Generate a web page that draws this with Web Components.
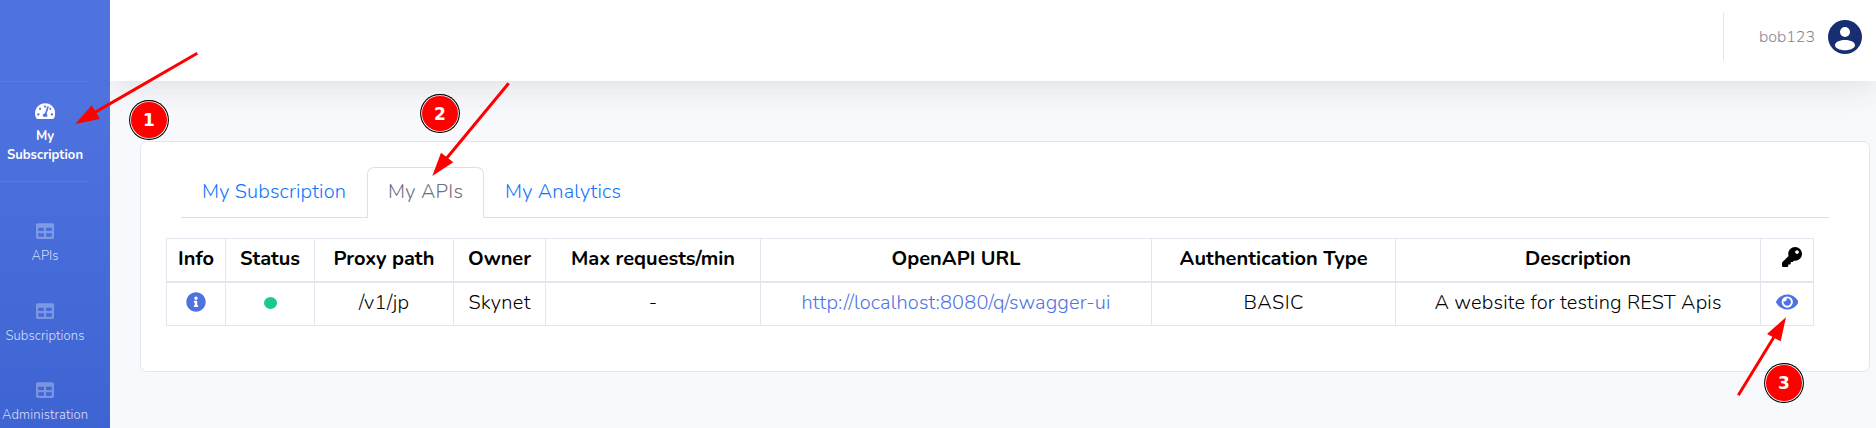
<!DOCTYPE html>
<html lang="en">
<head>
<meta charset="utf-8">
<title>My APIs</title>
<style>
html,body{margin:0;padding:0;height:428px;overflow:hidden}
body{font-family:Nunito,Lato,"Open Sans",sans-serif;font-size:20px;font-weight:350;line-height:1.5;color:#000;background:#f8f9fc}
</style>
</head>
<body>
<portal-app></portal-app>
<script>
const ICONS = {
  gauge: ['0 0 576 512', 'M288 32C128.94 32 0 160.94 0 320c0 52.8 14.25 102.26 39.06 144.8 5.61 9.62 16.3 15.2 27.44 15.2h443c11.14 0 21.83-5.58 27.44-15.2C561.75 422.26 576 372.8 576 320c0-159.06-128.94-288-288-288zm0 64c14.71 0 26.58 10.13 30.32 23.65-1.11 2.26-2.64 4.23-3.45 6.67l-9.22 27.67c-5.13 3.49-10.97 6.01-17.64 6.01-17.67 0-32-14.33-32-32S270.33 96 288 96zM96 384c-17.67 0-32-14.33-32-32s14.33-32 32-32 32 14.33 32 32-14.33 32-32 32zm48-160c-17.67 0-32-14.33-32-32s14.33-32 32-32 32 14.33 32 32-14.33 32-32 32zm246.77-72.41l-61.33 184C343.13 347.33 352 364.54 352 384c0 11.72-3.38 22.55-8.88 32H232.88c-5.5-9.45-8.88-20.28-8.88-32 0-33.94 26.5-61.43 59.9-63.59l61.34-184.01c4.17-12.56 17.73-19.45 30.36-15.17 12.57 4.19 19.35 17.79 15.17 30.36zm14.66 57.2l15.52-46.55c3.47-1.29 7.13-2.23 11.05-2.23 17.67 0 32 14.33 32 32s-14.33 32-32 32c-11.38-.01-20.89-6.28-26.57-15.22zM480 384c-17.67 0-32-14.33-32-32s14.33-32 32-32 32 14.33 32 32-14.33 32-32 32z'],
  table: ['0 0 512 512', 'M464 32H48C21.49 32 0 53.49 0 80v352c0 26.51 21.49 48 48 48h416c26.51 0 48-21.49 48-48V80c0-26.51-21.49-48-48-48zM224 416H64v-96h160v96zm0-160H64v-96h160v96zm224 160H288v-96h160v96zm0-160H288v-96h160v96z'],
  info: ['0 0 512 512', 'M256 8C119.043 8 8 119.083 8 256c0 136.997 111.043 248 248 248s248-111.003 248-248C504 119.083 392.957 8 256 8zm0 110c23.196 0 42 18.804 42 42s-18.804 42-42 42-42-18.804-42-42 18.804-42 42-42zm56 254c0 6.627-5.373 12-12 12h-88c-6.627 0-12-5.373-12-12v-24c0-6.627 5.373-12 12-12h12v-64h-12c-6.627 0-12-5.373-12-12v-24c0-6.627 5.373-12 12-12h64c6.627 0 12 5.373 12 12v100h12c6.627 0 12 5.373 12 12v24z'],
  key: ['0 0 512 512', 'M512 176.001C512 273.203 433.202 352 336 352c-11.22 0-22.19-1.062-32.827-3.069l-24.012 27.014A23.999 23.999 0 0 1 261.223 384H224v40c0 13.255-10.745 24-24 24h-40v40c0 13.255-10.745 24-24 24H24c-13.255 0-24-10.745-24-24v-78.059c0-6.365 2.529-12.47 7.029-16.971l161.802-161.802C163.108 213.814 160 195.271 160 176 160 78.798 238.797.001 335.999 0 433.488-.001 512 78.511 512 176.001zM336 128c0 26.51 21.49 48 48 48s48-21.49 48-48-21.49-48-48-48-48 21.49-48 48z'],
  eye: ['0 0 576 512', 'M572.52 241.4C518.29 135.59 410.93 64 288 64S57.68 135.64 3.48 241.41a32.35 32.35 0 0 0 0 29.19C57.71 376.41 165.07 448 288 448s230.32-71.64 284.52-177.41a32.35 32.35 0 0 0 0-29.19zM288 400a144 144 0 1 1 144-144 143.93 143.93 0 0 1-144 144zm0-240a95.31 95.31 0 0 0-25.31 3.79 47.85 47.85 0 0 1-66.9 66.9A95.78 95.78 0 1 0 288 160z'],
  user: ['0 0 34 34', 'M17 0a17 17 0 1 0 0 34a17 17 0 1 0 0-34zM17 7a5 5 0 1 1 0 10a5 5 0 1 1 0-10zM17 20c6 0 10 2.4 10 5.3c0 2.8-4.5 5-10 5s-10-2.2-10-5c0-2.9 4-5.3 10-5.3z']
};

class BaseElement extends HTMLElement {
  constructor() {
    super();
    this.attachShadow({ mode: 'open' });
  }
  connectedCallback() { this.shadowRoot.innerHTML = this.render(); this.ready(); }
  ready() {}
}

class UiIcon extends BaseElement {
  render() {
    const [box, d] = ICONS[this.getAttribute('name')];
    const h = this.getAttribute('size');
    return `<style>:host{display:block;flex:none}svg{display:block;height:${h}px}path{fill:currentColor;fill-rule:evenodd}</style>
      <svg viewBox="${box}"><path d="${d}"/></svg>`;
  }
}

/* A single line of text whose tracking is adjusted to fill the width "w". */
class FitText extends BaseElement {
  render() {
    return `<style>:host{display:inline-block;white-space:nowrap;width:${this.getAttribute('w')}px}span{display:inline-block}</style><span><slot></slot></span>`;
  }
  ready() {
    const span = this.shadowRoot.querySelector('span');
    const n = this.textContent.length;
    if (n < 2) return;
    const gap = (Number(this.getAttribute('w')) - span.getBoundingClientRect().width) / (n - 1);
    span.style.letterSpacing = gap + 'px';
    span.style.marginRight = -gap + 'px';
  }
}

class NavItem extends BaseElement {
  render() {
    return `<style>
      :host{display:flex;flex-direction:column;align-items:center;width:90px;height:79.5px;box-sizing:border-box;padding-top:21px;color:rgba(255,255,255,.8);font-size:13px;line-height:19px;text-align:center}
      :host([active]){color:#fff;font-weight:700;height:99px;padding-top:20px}
      ui-icon{color:rgba(255,255,255,.3);margin-bottom:7px}
      :host([active]) ui-icon{color:#fff;margin-bottom:7px}
    </style><ui-icon name="${this.getAttribute('icon')}" size="${this.getAttribute('size')}"></ui-icon><slot></slot>`;
  }
}

class SideBar extends BaseElement {
  render() {
    return `<style>
      :host{display:block;width:110px;height:1000px;background:linear-gradient(180deg,#4e73df 10%,#224abe 100%)}
      .brand{height:81px}
      hr{margin:0;border:0;height:1px;width:90px;background:rgba(255,255,255,.07)}
      .group{padding-top:19px}
    </style>
    <div class="brand"></div><hr>
    <nav-item active icon="gauge" size="18"><fit-text w="18">My</fit-text><fit-text w="76">Subscription</fit-text></nav-item>
    <hr>
    <div class="group">
      <nav-item icon="table" size="18"><fit-text w="27">APIs</fit-text></nav-item>
      <nav-item icon="table" size="18"><fit-text w="79">Subscriptions</fit-text></nav-item>
      <nav-item icon="table" size="18"><fit-text w="86">Administration</fit-text></nav-item>
    </div>`;
  }
}

class TopBar extends BaseElement {
  render() {
    return `<style>
      :host{display:flex;align-items:center;justify-content:flex-end;height:81px;box-sizing:border-box;padding:0 14px 7px 0;background:#fff;box-shadow:0 3px 35px rgba(58,59,69,.15);color:#858796;font-size:16px}
      i{width:1px;height:48px;background:#e3e6f0;margin-right:35px}
      fit-text{margin-right:13px}
      ui-icon{color:#172f70}
    </style><i></i><fit-text w="56">bob123</fit-text><ui-icon name="user" size="34"></ui-icon>`;
  }
}

class TabBar extends BaseElement {
  render() {
    return `<style>
      :host{display:flex;height:51px;box-sizing:border-box;border-bottom:1px solid #dddfeb;margin:0 40px;color:#0d76fd}
      div{box-sizing:border-box;height:51px;border:1px solid transparent;border-bottom:0;padding:9px 20px 0}
      .on{color:#6e707e;background:#fff;border-color:#dddfeb;border-radius:7px 7px 0 0}
    </style>
    <div><fit-text w="144">My Subscription</fit-text></div>
    <div class="on"><fit-text w="75">My APIs</fit-text></div>
    <div><fit-text w="116">My Analytics</fit-text></div>`;
  }
}

class ApiTable extends BaseElement {
  render() {
    const cols = [59, 89, 139, 92, 215, 391, 244, 365, 54];
    const t = (w, s) => `<fit-text w="${w}">${s}</fit-text>`;
    const head = [t(36, 'Info'), t(60, 'Status'), t(101, 'Proxy path'), t(63, 'Owner'), t(164, 'Max requests/min'), t(129, 'OpenAPI URL'), t(188, 'Authentication Type'), t(106, 'Description'), '<ui-icon class="key" name="key" size="20"></ui-icon>'];
    const row = ['<ui-icon class="blue" name="info" size="20"></ui-icon>', '<span class="dot"></span>', t(50, '/v1/jp'), t(62, 'Skynet'), '-', `<a>${t(309, 'http://localhost:8080/q/swagger-ui')}</a>`, t(60, 'BASIC'), t(287, 'A website for testing REST Apis'), '<ui-icon class="blue" name="eye" size="20"></ui-icon>'];
    return `<style>
      :host{display:block;width:1648px;margin:20px 0 0 25px;border:1px solid #e3e6f0;box-sizing:border-box}
      .row{display:grid;grid-template-columns:58px ${cols.slice(1, 8).map(c => c + 'px').join(' ')} 53px}
      .row>div{display:flex;align-items:center;justify-content:center;height:42px;box-sizing:border-box;border-left:1px solid #e3e6f0;line-height:30px}
      .row>div:first-child{border-left:0}
      .head{font-weight:700;border-bottom:2px solid #e3e6f0}
      .head>div{padding-bottom:3px}
      .body>div{padding-bottom:2px}
      a,.blue{color:#4e73df}
      .blue{margin-bottom:3px}
      .key{margin:0 0 3px 10px}
      .dot{width:13px;height:12px;border-radius:50%;background:#1cc88a}
    </style>
    <div class="row head">${head.map(c => `<div>${c}</div>`).join('')}</div>
    <div class="row body">${row.map(c => `<div>${c}</div>`).join('')}</div>`;
  }
}

class UiCard extends BaseElement {
  render() {
    return `<style>:host{display:block;box-sizing:border-box;width:1730px;height:231px;margin:60px 0 0 30px;padding-top:25px;background:#fff;border:1px solid #e3e6f0;border-radius:7px;position:relative}</style><slot></slot>`;
  }
}

/* Numbered call-outs and arrows drawn over the page. */
class StepMarks extends BaseElement {
  render() {
    const steps = [[1, 149, 120], [2, 440, 113.7], [3, 1784, 383]];
    return `<style>
      :host{position:absolute;inset:0;pointer-events:none}
      svg{position:absolute;inset:0}
      b{position:absolute;width:35.4px;height:35.4px;margin:-17.7px 0 0 -17.7px;border-radius:50%;background:#f00;box-shadow:0 0 0 .8px #fff,0 0 0 1.9px #000;color:#fff;font:700 17px/36px "DejaVu Sans",sans-serif;text-align:center}
    </style>
    <svg width="1876" height="428" fill="#f00" stroke="#f00" stroke-width="3">
      <path d="M197.3 53.3L95 112.4M508.7 83.3L446 159M1738.3 395.3L1774 337" fill="none"/>
      <path stroke="none" d="M75.3 124L91.7 105.3 99.9 119zM432.3 176L441 152.7 453.3 162.3zM1786 317.3L1767 334 1780.7 341.3z"/>
    </svg>
    ${steps.map(([n, x, y]) => `<b style="left:${x}px;top:${y}px">${n}</b>`).join('')}`;
  }
}

class PortalApp extends BaseElement {
  render() {
    return `<style>
      :host{display:flex;width:1876px;height:428px;overflow:hidden;position:relative}
      side-bar{flex:none}
      main{flex:1;min-width:0;overflow:hidden;background:#f8f9fc}
    </style>
    <side-bar></side-bar>
    <main><top-bar></top-bar><ui-card><tab-bar></tab-bar><api-table></api-table></ui-card></main>
    <step-marks></step-marks>`;
  }
}

customElements.define('ui-icon', UiIcon);
customElements.define('fit-text', FitText);
customElements.define('nav-item', NavItem);
customElements.define('side-bar', SideBar);
customElements.define('top-bar', TopBar);
customElements.define('tab-bar', TabBar);
customElements.define('api-table', ApiTable);
customElements.define('ui-card', UiCard);
customElements.define('step-marks', StepMarks);
customElements.define('portal-app', PortalApp);
</script>
</body>
</html>
